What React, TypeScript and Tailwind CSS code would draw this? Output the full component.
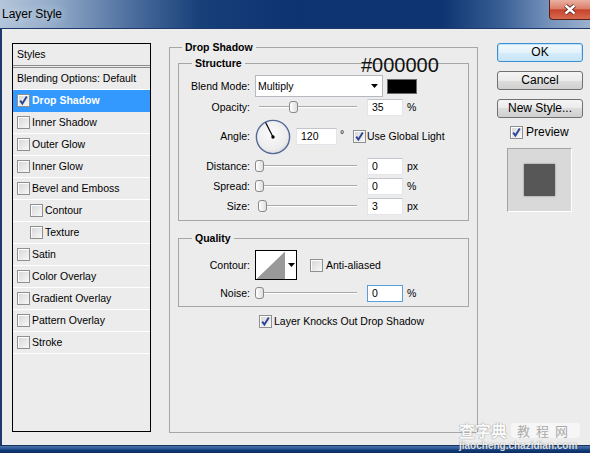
import React from 'react'

type StyleRow = { label: string; checked?: boolean; active?: boolean; sub?: boolean }

const styleRows: StyleRow[] = [
	{ label: 'Drop Shadow', checked: true, active: true },
	{ label: 'Inner Shadow' },
	{ label: 'Outer Glow' },
	{ label: 'Inner Glow' },
	{ label: 'Bevel and Emboss' },
	{ label: 'Contour', sub: true },
	{ label: 'Texture', sub: true },
	{ label: 'Satin' },
	{ label: 'Color Overlay' },
	{ label: 'Gradient Overlay' },
	{ label: 'Pattern Overlay' },
	{ label: 'Stroke' }
]

const Check = ({ checked = false }: { checked?: boolean }) => (
	<span className="flex h-[13px] w-[13px] shrink-0 items-center justify-center border border-[#8e8f8f] bg-[linear-gradient(135deg,#d6d6d6,#f8f8f8)] shadow-[inset_1px_1px_0_#ffffff]">
		{checked && (
			<svg width="11" height="11" viewBox="0 0 11 11">
				<path d="M2.2 5.6 L4.4 8.6 L8.8 1.6" fill="none" stroke="#2b4596" strokeWidth="1.9" />
			</svg>
		)}
	</span>
)

const Arrow = () => (
	<svg width="7" height="4" viewBox="0 0 7 4">
		<polygon points="0,0 7,0 3.5,4" fill="#000" />
	</svg>
)

const Slider = ({ pos }: { pos: number }) => (
	<div className="relative ml-[5px] h-[14px] w-[106px] shrink-0">
		<div className="absolute left-[4px] top-[6px] h-[2px] w-[98px] border-t border-b border-t-[#a9a9a9] border-b-white" />
		<div
			className="absolute top-[1px] h-[12px] w-[9px] rounded-[3px] border border-[#8a8a8a] bg-[linear-gradient(to_right,#ffffff,#dedede)]"
			style={{ left: pos }}
		/>
	</div>
)

const NumBox = ({ value, focus = false, wide = false }: { value: string; focus?: boolean; wide?: boolean }) => (
	<div
		className={`flex h-[17px] shrink-0 items-center bg-white pl-[4px] ${wide ? 'ml-[5px] w-[41px]' : 'ml-[6px] w-[36px]'} ${focus ? 'border border-[#5a9ddb]' : 'border border-[#e2e6ea] border-t-[#c2c6cc]'}`}
	>
		{value}
	</div>
)

const SliderRow = ({ label, pos, value, unit, focus = false }: { label: string; pos: number; value: string; unit: string; focus?: boolean }) => (
	<div className="flex h-[20px] items-center">
		<span className="w-[71px] shrink-0 text-right">{label}</span>
		<Slider pos={pos} />
		<NumBox value={value} focus={focus} />
		<span className="ml-[4px]">{unit}</span>
	</div>
)

const Btn = ({ children, primary = false, className = '' }: { children: React.ReactNode; primary?: boolean; className?: string }) => (
	<div
		className={`flex h-[19px] w-[86px] items-center justify-center rounded-[3px] border text-[12px] ${className} ${primary ? 'border-[#3c8fd0] bg-[linear-gradient(#f2f9fd,#e4f2fb_50%,#d4ebf9_50%,#c9e5f7)] shadow-[inset_0_0_0_1px_#bfe3f8]' : 'border-[#707070] bg-[linear-gradient(#f4f4f4,#ebebeb_50%,#dddddd_50%,#d0d0d0)]'}`}
	>
		{children}
	</div>
)

export default function App() {
	return (
		<div className="relative flex h-[453px] w-[590px] flex-col overflow-hidden bg-[#ececec] font-['Liberation_Sans',Arial,sans-serif] text-[10.5px] leading-[13px] text-black">
			{/* Title bar */}
			<div className="flex h-[28px] shrink-0 items-start justify-between bg-[linear-gradient(to_right,#b3c5da_0%,#93abc9_9%,#4e6f9f_22%,#173f78_34%,#0d3371_50%,#0e3571_75%,#3a5f95_85%,#7492bb_93%,#9cb1cd_100%)]">
				<span className="pl-[2px] pt-[7px] text-[12px] leading-[14px] [text-shadow:0_0_8px_#d5e0ec]">Layer Style</span>
				<div className="flex h-[20px] w-[41px] items-center justify-center rounded-bl-[4px] border-b border-l border-[#5a1f18] bg-[linear-gradient(#eab1a3,#dc7f6a_45%,#c8432c_52%,#d66a4f)]">
					<svg width="14" height="11" viewBox="0 0 14 11">
						<path d="M2.5 1.5 L11.5 9.5 M11.5 1.5 L2.5 9.5" stroke="#4a1a14" strokeWidth="4" />
						<path d="M2.5 1.5 L11.5 9.5 M11.5 1.5 L2.5 9.5" stroke="#ffffff" strokeWidth="2.4" />
					</svg>
				</div>
			</div>

			{/* Client area */}
			<div className="flex flex-1 border-l-2 border-t border-[#1c3a6b] pl-[10px] pt-[11px]">
				{/* Styles list */}
				<div className="mt-[3px] flex h-[389px] w-[139px] shrink-0 flex-col border border-black">
					<div className="flex h-[24px] shrink-0 items-center border-b-[3px] border-double border-[#8c8c8c] pl-[4px]">Styles</div>
					<div className="flex h-[22px] shrink-0 items-center border-b border-white pl-[4px]">Blending Options: Default</div>
					{styleRows.map(row => (
						<div
							key={row.label}
							className={`flex h-[22px] shrink-0 items-center gap-[2px] border-b ${row.sub ? 'pl-[17px]' : 'pl-[4px]'} ${row.active ? 'border-[#3399ff] bg-[#3399ff] font-bold text-white' : 'border-white'}`}
						>
							<Check checked={row.checked} />
							<span>{row.label}</span>
						</div>
					))}
				</div>

				{/* Drop Shadow group */}
				<fieldset className="ml-[18px] h-[393px] w-[309px] shrink-0 border border-[#a6a6a6]">
					<legend className="ml-[12px] px-[3px] font-bold leading-[14px]">Drop Shadow</legend>
					<div className="px-[8px]">
						<fieldset className="mt-[2px] border border-[#a6a6a6] pb-[4px]">
							<legend className="ml-[13px] px-[3px] font-bold leading-[14px]">Structure</legend>
							<div className="pt-[5px]">
								<div className="flex h-[22px] items-center">
									<span className="w-[71px] shrink-0 text-right">Blend Mode:</span>
									<div className="ml-[5px] flex h-[22px] w-[128px] items-center justify-between border border-[#b5b9bf] bg-white pl-[2px] pr-[4px]">
										<span>Multiply</span>
										<Arrow />
									</div>
									<div className="ml-[4px] h-[15px] w-[30px] border border-[#6a6a6a] bg-black" />
								</div>
								<SliderRow label="Opacity:" pos={34} value="35" unit="%" />
								<div className="flex h-[39px] items-center">
									<span className="w-[71px] shrink-0 text-right">Angle:</span>
									<svg className="ml-[5px] shrink-0" width="36" height="36" viewBox="0 0 36 36">
										<defs>
											<radialGradient id="dial" cx="45%" cy="40%" r="65%">
												<stop offset="0" stopColor="#fbfbfb" />
												<stop offset="0.75" stopColor="#ececec" />
												<stop offset="1" stopColor="#d4d4d4" />
											</radialGradient>
										</defs>
										<circle cx="18" cy="18" r="16.6" fill="url(#dial)" stroke="#53689a" strokeWidth="1.4" />
										<line x1="18" y1="18" x2="10.6" y2="3.6" stroke="#000" strokeWidth="1.2" />
										<circle cx="18" cy="18" r="1.7" fill="#000" />
									</svg>
									<NumBox value="120" wide />
									<span className="ml-[3px] w-[13px] shrink-0 self-start pt-[11px]">°</span>
									<Check checked />
									<span className="ml-[1px]">Use Global Light</span>
								</div>
								<SliderRow label="Distance:" pos={0} value="0" unit="px" />
								<SliderRow label="Spread:" pos={0} value="0" unit="%" />
								<SliderRow label="Size:" pos={3} value="3" unit="px" />
							</div>
						</fieldset>

						<fieldset className="mt-[10px] border border-[#a6a6a6] pb-[4px]">
							<legend className="ml-[13px] px-[3px] font-bold leading-[14px]">Quality</legend>
							<div className="pt-[5px]">
								<div className="flex h-[30px] items-center">
									<span className="w-[71px] shrink-0 text-right">Contour:</span>
									<div className="ml-[5px] flex h-[30px] w-[42px] shrink-0 border border-black bg-white">
										<svg width="29" height="28" viewBox="0 0 29 28">
											<polygon points="0.5,28 29,0.5 29,28" fill="#999999" />
										</svg>
										<div className="flex flex-1 items-center justify-center border-l border-white">
											<Arrow />
										</div>
									</div>
									<span className="ml-[13px]">
										<Check />
									</span>
									<span className="ml-[3px]">Anti-aliased</span>
								</div>
								<div className="mt-[4px] flex h-[18px] items-center">
									<span className="w-[71px] shrink-0 text-right">Noise:</span>
									<Slider pos={0} />
									<NumBox value="0" focus />
									<span className="ml-[4px]">%</span>
								</div>
							</div>
						</fieldset>

						<div className="mt-[4px] flex h-[20px] items-center">
							<span className="ml-[81px]">
								<Check checked />
							</span>
							<span className="ml-[2px]">Layer Knocks Out Drop Shadow</span>
						</div>
					</div>
				</fieldset>

				{/* Buttons */}
				<div className="ml-[19px] mt-[3px] flex w-[86px] shrink-0 flex-col">
					<Btn primary>OK</Btn>
					<Btn className="mt-[9px]">Cancel</Btn>
					<Btn className="mt-[9px]">New Style...</Btn>
					<div className="mt-[8px] flex h-[13px] items-center pl-[13px] text-[12px]">
						<Check checked />
						<span className="ml-[3px]">Preview</span>
					</div>
					<div className="ml-[10px] mt-[9px] flex h-[64px] w-[65px] items-center justify-center border border-[#a3a3a3] border-b-white border-r-white bg-[#d9d9d9]">
						<div className="h-[32px] w-[31px] bg-[#575757] shadow-[0_0_2px_#8a8a8a]" />
					</div>
				</div>
			</div>

			{/* Window bottom frame */}
			<div className="h-[8px] shrink-0 border-t border-[#17325c] bg-[linear-gradient(#4b74ab,#2c5694_40%,#113a76_60%,#0b2d62)]" />

			{/* Colour annotation over the panel */}
			<span className="absolute left-[361px] top-[55px] text-[20px] leading-[20px] text-[#111]">#000000</span>

			{/* Watermark */}
			<div className="absolute left-[459px] top-[421px] flex flex-col items-start opacity-80">
				<div className="flex items-center gap-[4px]">
					<span className="font-['Noto_Sans_CJK_SC',sans-serif] text-[16px] font-bold leading-[18px] text-white [text-shadow:0_0_1px_#777,0_0_1px_#777]">查字典</span>
					<span className="rounded-[4px] bg-white/70 px-[6px] font-['Noto_Sans_CJK_SC',sans-serif] text-[13px] leading-[15px] tracking-[6px] text-[#9a9a9a]">教程网</span>
				</div>
				<span className="mt-[1px] text-[10px] font-bold leading-[11px] text-white [text-shadow:0_0_1px_#333]">jiaocheng.chazidian.com</span>
			</div>
		</div>
	)
}
